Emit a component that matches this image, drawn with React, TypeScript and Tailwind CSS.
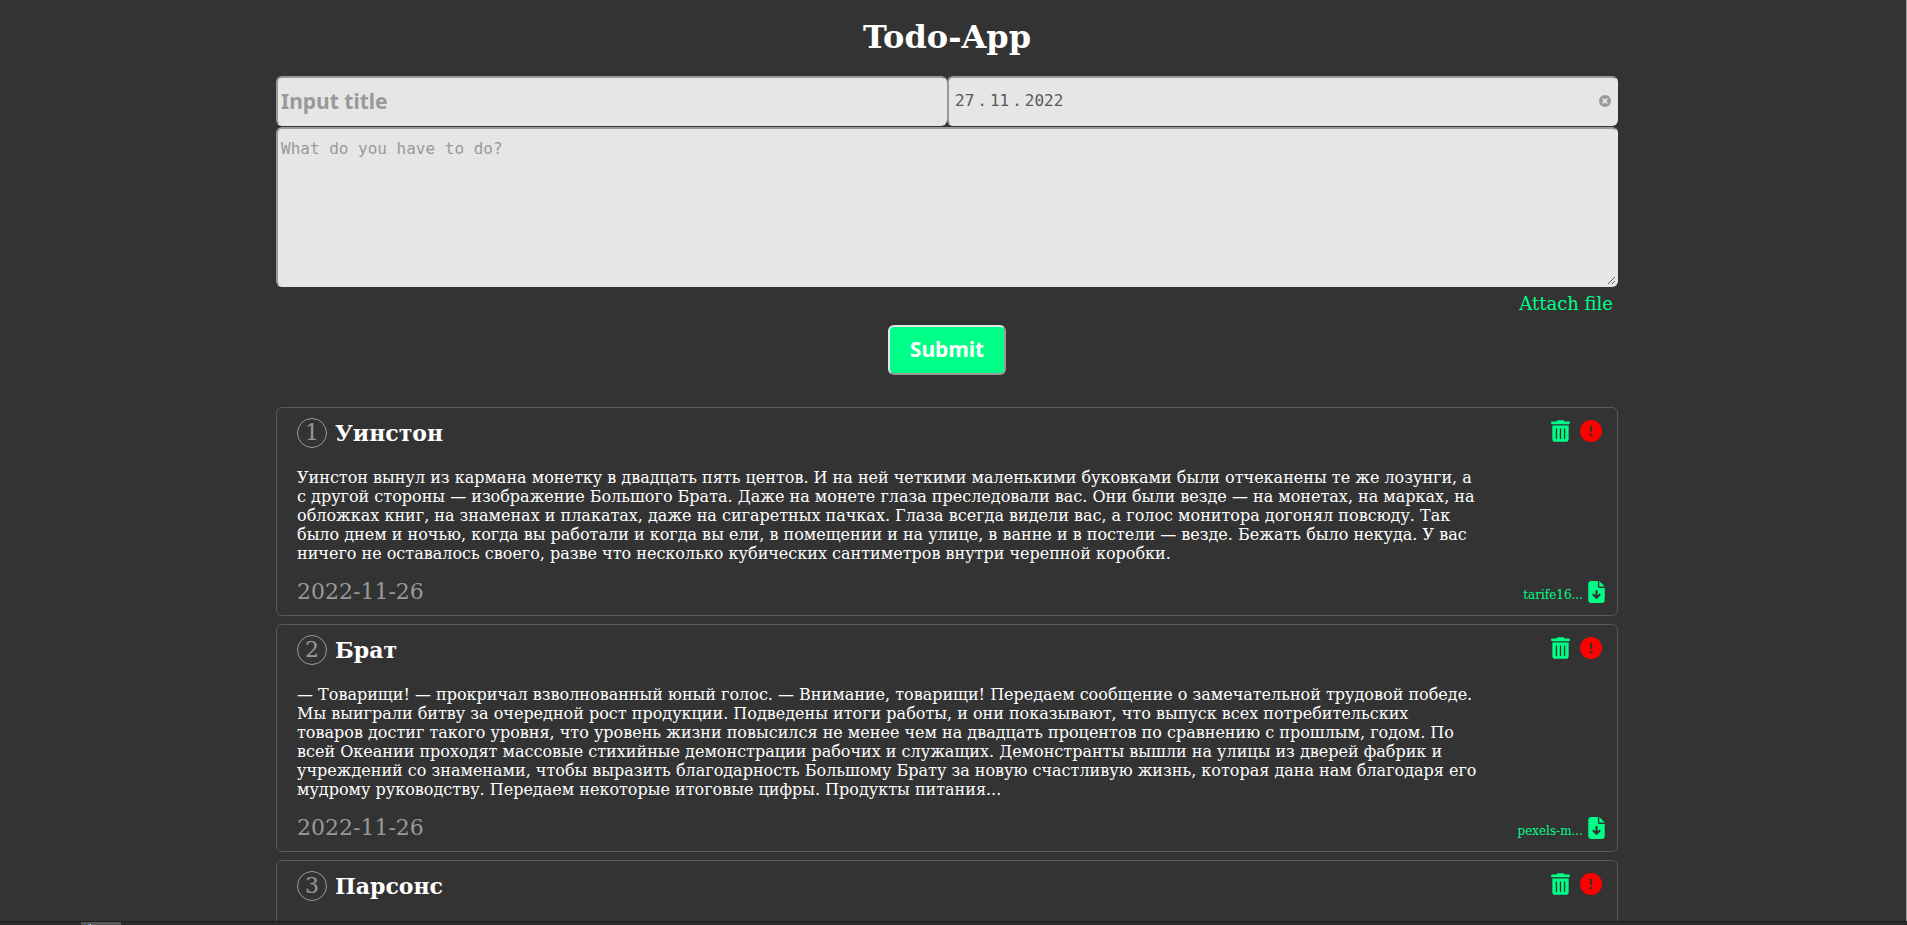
import { useState } from "react";
import { FaCircleExclamation, FaFileArrowDown, FaTrashCan } from "react-icons/fa6";

type Todo = { id: number; title: string; text: string; date: string; file: string };

const todos: Todo[] = [
  {
    id: 1,
    title: "Уинстон",
    text: "Уинстон вынул из кармана монетку в двадцать пять центов. И на ней четкими маленькими буковками были отчеканены те же лозунги, а с другой стороны — изображение Большого Брата. Даже на монете глаза преследовали вас. Они были везде — на монетах, на марках, на обложках книг, на знаменах и плакатах, даже на сигаретных пачках. Глаза всегда видели вас, а голос монитора догонял повсюду. Так было днем и ночью, когда вы работали и когда вы ели, в помещении и на улице, в ванне и в постели — везде. Бежать было некуда. У вас ничего не оставалось своего, разве что несколько кубических сантиметров внутри черепной коробки.",
    date: "2022-11-26",
    file: "tarife16...",
  },
  {
    id: 2,
    title: "Брат",
    text: "— Товарищи! — прокричал взволнованный юный голос. — Внимание, товарищи! Передаем сообщение о замечательной трудовой победе. Мы выиграли битву за очередной рост продукции. Подведены итоги работы, и они показывают, что выпуск всех потребительских товаров достиг такого уровня, что уровень жизни повысился не менее чем на двадцать процентов по сравнению с прошлым, годом. По всей Океании проходят массовые стихийные демонстрации рабочих и служащих. Демонстранты вышли на улицы из дверей фабрик и учреждений со знаменами, чтобы выразить благодарность Большому Брату за новую счастливую жизнь, которая дана нам благодаря его мудрому руководству. Передаем некоторые итоговые цифры. Продукты питания...",
    date: "2022-11-26",
    file: "pexels-m...",
  },
  { id: 3, title: "Парсонс", text: "", date: "", file: "" },
];

const fieldBox =
  "rounded-[6px] border-2 border-t-[#999999] border-l-[#999999] border-r-[#e6e6e6] border-b-[#e6e6e6] bg-[#e6e6e6] outline-none";

function TodoCard({ todo }: { todo: Todo }) {
  return (
    <li className="rounded-[6px] border border-[#595959] px-5 pt-[10px] pb-[9px]">
      <div className="flex h-[30px] items-start justify-between">
        <div className="flex items-center gap-2">
          <span className="flex size-[30px] items-center justify-center rounded-full border border-[#999999] text-[22px] leading-[28px] text-[#999999]">
            {todo.id}
          </span>
          <h2 className="text-[22px] leading-[30px] font-bold text-white">{todo.title}</h2>
        </div>
        <div className="-mr-[5px] flex items-center gap-[10px] pt-[2px]">
          <button type="button" aria-label="Delete" className="text-[#00ff88]">
            <FaTrashCan className="h-[22px] w-[19px]" />
          </button>
          <button type="button" aria-label="Mark as urgent" className="text-[#ff0000]">
            <FaCircleExclamation size={22} />
          </button>
        </div>
      </div>
      <p className="mt-5 min-h-[95px] max-w-[1181px] text-[16px] leading-[19px] text-white">{todo.text}</p>
      <div className="mt-[15px] flex h-[28px] items-center justify-between">
        {todo.date && (
          <time dateTime={todo.date} className="text-[22px] leading-[28px] text-[#999999]">
            {todo.date}
          </time>
        )}
        {todo.file && (
          <a href="#file" className="-mr-2 flex items-end gap-[5px] text-[12px] leading-4 text-[#00ff88]">
            <span>{todo.file}</span>
            <FaFileArrowDown className="h-[22px] w-[17px]" />
          </a>
        )}
      </div>
    </li>
  );
}

function DateField() {
  const [day, setDay] = useState("27");
  const [month, setMonth] = useState("11");
  const [year, setYear] = useState("2022");

  const clear = () => {
    setDay("");
    setMonth("");
    setYear("");
  };

  return (
    <div
      role="group"
      aria-label="Date"
      className={`${fieldBox} flex h-[50px] min-w-0 items-center justify-between pr-[5px] pl-[6px]`}
    >
      <div className="flex items-center font-['DejaVu_Sans_Mono',monospace] text-[16px] leading-[20px] text-[#595959]">
        <input
          aria-label="Day"
          value={day}
          onChange={(e) => setDay(e.target.value)}
          className="w-[2ch] bg-transparent outline-none"
        />
        <span className="px-[3px]">.</span>
        <input
          aria-label="Month"
          value={month}
          onChange={(e) => setMonth(e.target.value)}
          className="w-[2ch] bg-transparent outline-none"
        />
        <span className="px-[3px]">.</span>
        <input
          aria-label="Year"
          value={year}
          onChange={(e) => setYear(e.target.value)}
          className="w-[4ch] bg-transparent outline-none"
        />
      </div>
      <button type="button" aria-label="Clear date" onClick={clear}>
        <svg viewBox="0 0 12 12" className="size-3">
          <circle cx="6" cy="6" r="6" fill="#999999" />
          <path d="M3.7 3.7l4.6 4.6M8.3 3.7L3.7 8.3" stroke="#e6e6e6" strokeWidth="1.8" />
        </svg>
      </button>
    </div>
  );
}

export default function App() {
  const [title, setTitle] = useState("");
  const [text, setText] = useState("");

  return (
    <div className="flex h-screen flex-col bg-[#333333] font-['DejaVu_Serif',serif]">
      <main className="min-h-0 flex-1 overflow-hidden border-r border-[#999999] pr-3">
        <div className="mx-auto max-w-[1342px]">
          <h1 className="pt-[18px] text-center text-[32px] leading-[38px] font-bold text-white">Todo-App</h1>
          <form className="mt-5" onSubmit={(e) => e.preventDefault()}>
            <div className="grid grid-cols-2">
              <input
                aria-label="Title"
                placeholder="Input title"
                value={title}
                onChange={(e) => setTitle(e.target.value)}
                className={`${fieldBox} h-[50px] min-w-0 px-[3px] font-['Noto_Sans',sans-serif] text-[21px] font-bold text-[#4d4d4d] placeholder:text-[#999999]`}
              />
              <DateField />
            </div>
            <textarea
              aria-label="Description"
              placeholder="What do you have to do?"
              value={text}
              onChange={(e) => setText(e.target.value)}
              className={`${fieldBox} mt-px block h-[160px] w-full resize px-[3px] py-[10px] font-['DejaVu_Sans_Mono',monospace] text-[16px] leading-[19px] text-[#4d4d4d] placeholder:text-[#999999]`}
            />
            <div className="mt-[6px] flex h-[22px] justify-end pr-[5px]">
              <button type="button" className="text-[18px] leading-[22px] text-[#00ff88]">
                Attach file
              </button>
            </div>
            <button
              type="submit"
              className="mx-auto mt-[10px] block h-[50px] w-[118px] rounded-[6px] border-2 border-t-[#e6e6e6] border-r-[#999999] border-b-[#999999] border-l-[#e6e6e6] bg-[#00ff88] font-['Noto_Sans',sans-serif] text-[21px] font-bold text-white"
            >
              Submit
            </button>
          </form>
          <ul className="mt-8 flex flex-col gap-2">
            {todos.map((todo) => (
              <TodoCard key={todo.id} todo={todo} />
            ))}
          </ul>
        </div>
      </main>
      <footer className="flex h-1 shrink-0 border-t border-[#1f1f1f] bg-[#2d2b2c] pl-[81px]">
        <div className="flex w-10 bg-[#575757] pt-[2px] pl-[7px]">
          <span className="h-px w-[2px] bg-[#4285f4]" />
          <span className="h-px w-px bg-[#f4c542]" />
        </div>
      </footer>
    </div>
  );
}
